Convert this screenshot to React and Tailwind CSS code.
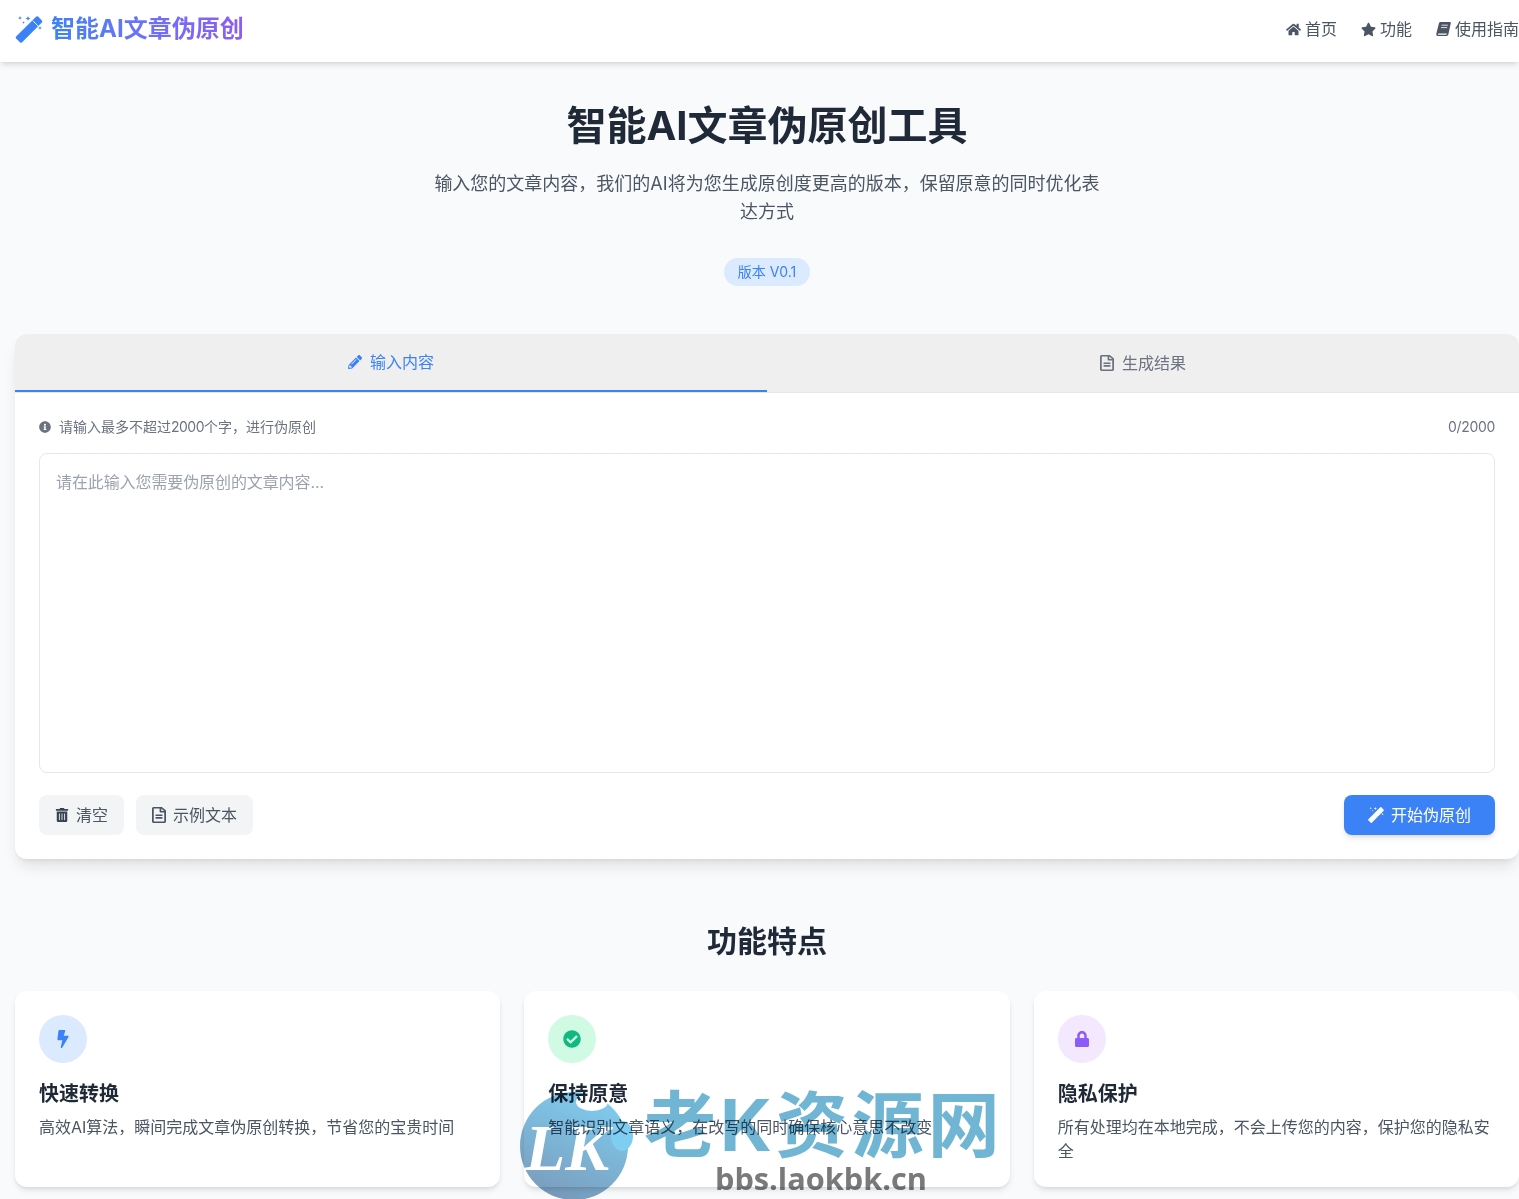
import React from "react";
import {
  FaHome, FaStar, FaPencilAlt, FaRegFileAlt, FaInfoCircle,
  FaTrashAlt, FaBolt, FaCheckCircle, FaLock,
} from "react-icons/fa";

// wand with sparkles, the package one has a different shape
const MagicIcon = ({ className }) => (
  <svg className={className} viewBox="0 0 27 27" fill="currentColor">
    <path d="M0.6 20.6 L20.8 0.6 Q21.7 -0.2 22.6 0.6 L26.4 4.6 Q27.2 5.5 26.4 6.4 L6.4 26.4 Q5.5 27.2 4.6 26.4 L0.6 22.4 Q-0.2 21.5 0.6 20.6 Z" />
    <path d="M17.2 4.6 L22.6 10" stroke="#fff" strokeWidth="0.9" fill="none" />
    <path d="M4.5 0 L5.1 1.5 L6.6 2 L5.1 2.6 L4.5 4 L3.9 2.6 L2.4 2 L3.9 1.5 Z" />
    <path d="M12.5 0 L13.2 1.8 L15 2.5 L13.2 3.2 L12.5 5 L11.8 3.2 L10 2.5 L11.8 1.8 Z" />
    <path d="M8 5.2 L8.4 6.1 L9.3 6.5 L8.4 6.9 L8 7.8 L7.6 6.9 L6.7 6.5 L7.6 6.1 Z" />
    <path d="M24.5 10.2 L25.1 11.4 L26.5 12 L25.1 12.6 L24.5 13.8 L23.9 12.6 L22.5 12 L23.9 11.4 Z" />
  </svg>
);

// slanted book
const BookIcon = ({ className }) => (
  <svg className={className} viewBox="0 0 15 14" fill="currentColor">
    <path d="M4.6 0 H14.2 Q15 0 14.8 0.9 L12.4 12.2 Q12.1 14 10.4 14 H1.8 Q0 14 0.3 11.8 L2.9 1.4 Q3.2 0 4.6 0 Z" />
    <path d="M5.6 3.2 H11.8 M5 5.6 H11.2" stroke="#fff" strokeWidth="0.8" fill="none" />
    <path d="M2.2 11.4 H11 Q10.6 12.8 9.8 12.8 H2.4 Q1.4 12.4 2.2 11.4 Z" fill="#fff" />
  </svg>
);

const features = [
  { icon: <FaBolt className="text-[18px]" />, bg: "bg-[#dbeafe]", color: "text-[#3b82f6]", title: "快速转换", text: "高效AI算法，瞬间完成文章伪原创转换，节省您的宝贵时间" },
  { icon: <FaCheckCircle className="text-[18px]" />, bg: "bg-[#d1fae5]", color: "text-[#10b981]", title: "保持原意", text: "智能识别文章语义，在改写的同时确保核心意思不改变" },
  { icon: <FaLock className="text-[16px]" />, bg: "bg-[#f3e8ff]", color: "text-[#8b5cf6]", title: "隐私保护", text: "所有处理均在本地完成，不会上传您的内容，保护您的隐私安全" },
];

const Watermark = () => (
  <div className="absolute left-[520px] top-[1075px] w-[490px] h-[124px] pointer-events-none mix-blend-multiply">
    <svg className="absolute left-0 top-[15px]" width="116" height="112" viewBox="0 0 116 112">
      <defs>
        <linearGradient id="lk" x1="0.7" y1="0" x2="0.3" y2="1">
          <stop offset="0" stopColor="#7fcdf0" />
          <stop offset="1" stopColor="#7a9cbc" />
        </linearGradient>
      </defs>
      <circle cx="54" cy="56" r="54" fill="url(#lk)" />
      <ellipse cx="72" cy="12" rx="16" ry="9" fill="#fff" />
      <ellipse cx="102" cy="46" rx="11" ry="15" fill="#7fcdf0" />
    </svg>
    <div className="absolute left-[5px] top-[40px] text-[66px] leading-[66px] font-bold italic text-white font-['Liberation_Serif',serif]">LK</div>
    <div className="absolute left-[124px] top-[2px] text-[72px] leading-[96px] tracking-[4px] font-bold text-[#70b6d4] whitespace-nowrap">老K资源网</div>
    <div className="absolute left-[195px] top-[87px] text-[30.7px] leading-[32px] font-bold text-[#7a7a7a] whitespace-nowrap font-['Open_Sans',sans-serif]">bbs.laokbk.cn</div>
  </div>
);

export default function App() {
  return (
    <div className="relative min-h-screen bg-[#f9fafb] overflow-hidden text-[#1f2937] font-['Inter','Noto_Sans_CJK_SC',sans-serif]">
      <header className="h-[62px] pb-1 bg-white shadow-md flex items-center justify-between pl-[15px]">
        <div className="flex items-center gap-2">
          <MagicIcon className="w-[28px] h-[27px] text-[#3b82f6]" />
          <span className="text-[24px] font-bold bg-gradient-to-r from-[#3b82f6] to-[#8b5cf6] bg-clip-text text-transparent">智能AI文章伪原创</span>
        </div>
        <nav className="flex items-center gap-6 text-[#4b5563]">
          <a className="flex items-center gap-1"><FaHome className="text-[15px]" />首页</a>
          <a className="flex items-center gap-1"><FaStar className="text-[15px]" />功能</a>
          <a className="flex items-center gap-1"><BookIcon className="w-[15px] h-[14px]" />使用指南</a>
        </nav>
      </header>

      <main className="pl-[15px] pb-3">
        <section className="pt-[39px] text-center">
          <h1 className="text-[40px] leading-[50px] font-bold">智能AI文章伪原创工具</h1>
          <p className="mt-[19px] mx-auto max-w-[672px] text-[18px] leading-[28px] text-[#4b5563]">输入您的文章内容，我们的AI将为您生成原创度更高的版本，保留原意的同时优化表达方式</p>
          <span className="inline-block mt-[32px] rounded-full bg-[#dbeafe] text-[#3b82f6] text-[14px] leading-[20px] px-[14px] py-1">版本 V0.1</span>
        </section>

        <section className="mt-[48px] bg-white rounded-xl shadow-lg overflow-hidden">
          <div className="flex bg-[#efefef] border-b border-[#e5e7eb] h-[59px]">
            <div className="flex-1 flex items-center justify-center gap-2 h-[58px] border-b-2 border-[#3b82f6] text-[#3b82f6]">
              <FaPencilAlt className="text-[14px]" />输入内容
            </div>
            <div className="flex-1 flex items-center justify-center gap-2 h-[58px] text-[#6b7280]">
              <FaRegFileAlt preserveAspectRatio="none" className="w-[14px] h-[16px]" />生成结果
            </div>
          </div>

          <div className="p-6">
            <div className="flex items-center justify-between text-[14px] leading-[20px] text-[#6b7280] mb-4">
              <span className="flex items-center gap-2"><FaInfoCircle className="text-[12px]" /><span>请输入最多不超过<span className="tracking-[-0.5px]">2000</span>个字，进行伪原创</span></span>
              <span className="tracking-[-0.3px]">0/2000</span>
            </div>
            <textarea
              className="block w-full h-[320px] resize-none rounded-lg border border-[#e5e7eb] bg-white px-4 py-4 text-[16px] leading-[24px] placeholder:text-[#9ca3af] placeholder:tracking-[-0.1px]"
              placeholder="请在此输入您需要伪原创的文章内容..."
            />
            <div className="mt-[22px] flex items-center justify-between">
              <div className="flex gap-3">
                <button className="flex items-center gap-[7px] h-10 pl-4 pr-4 rounded-lg bg-[#f3f4f6] text-[#4b5563]"><FaTrashAlt className="w-[14px] h-[14px] text-[#374151]" />清空</button>
                <button className="flex items-center gap-[7px] h-10 px-4 rounded-lg bg-[#f3f4f6] text-[#4b5563]"><FaRegFileAlt preserveAspectRatio="none" className="w-[14px] h-[16px]" />示例文本</button>
              </div>
              <button className="flex items-center gap-[7px] h-10 px-6 rounded-lg bg-[#3b82f6] text-white shadow-md"><MagicIcon className="w-4 h-4" />开始伪原创</button>
            </div>
          </div>
        </section>

        <h2 className="mt-[62px] text-center text-[30px] leading-[40px] font-bold">功能特点</h2>

        <section className="mt-[30px] grid grid-cols-3 gap-6">
          {features.map((f) => (
            <div key={f.title} className="bg-white rounded-xl shadow-md p-6 h-[196px]">
              <div className={`w-12 h-12 rounded-full flex items-center justify-center ${f.bg} ${f.color}`}>{f.icon}</div>
              <h3 className="mt-[17px] text-[20px] leading-[28px] font-bold">{f.title}</h3>
              <p className="mt-[7px] text-[16px] leading-[24px] text-[#4b5563]">{f.text}</p>
            </div>
          ))}
        </section>
      </main>

      <Watermark />
    </div>
  );
}
